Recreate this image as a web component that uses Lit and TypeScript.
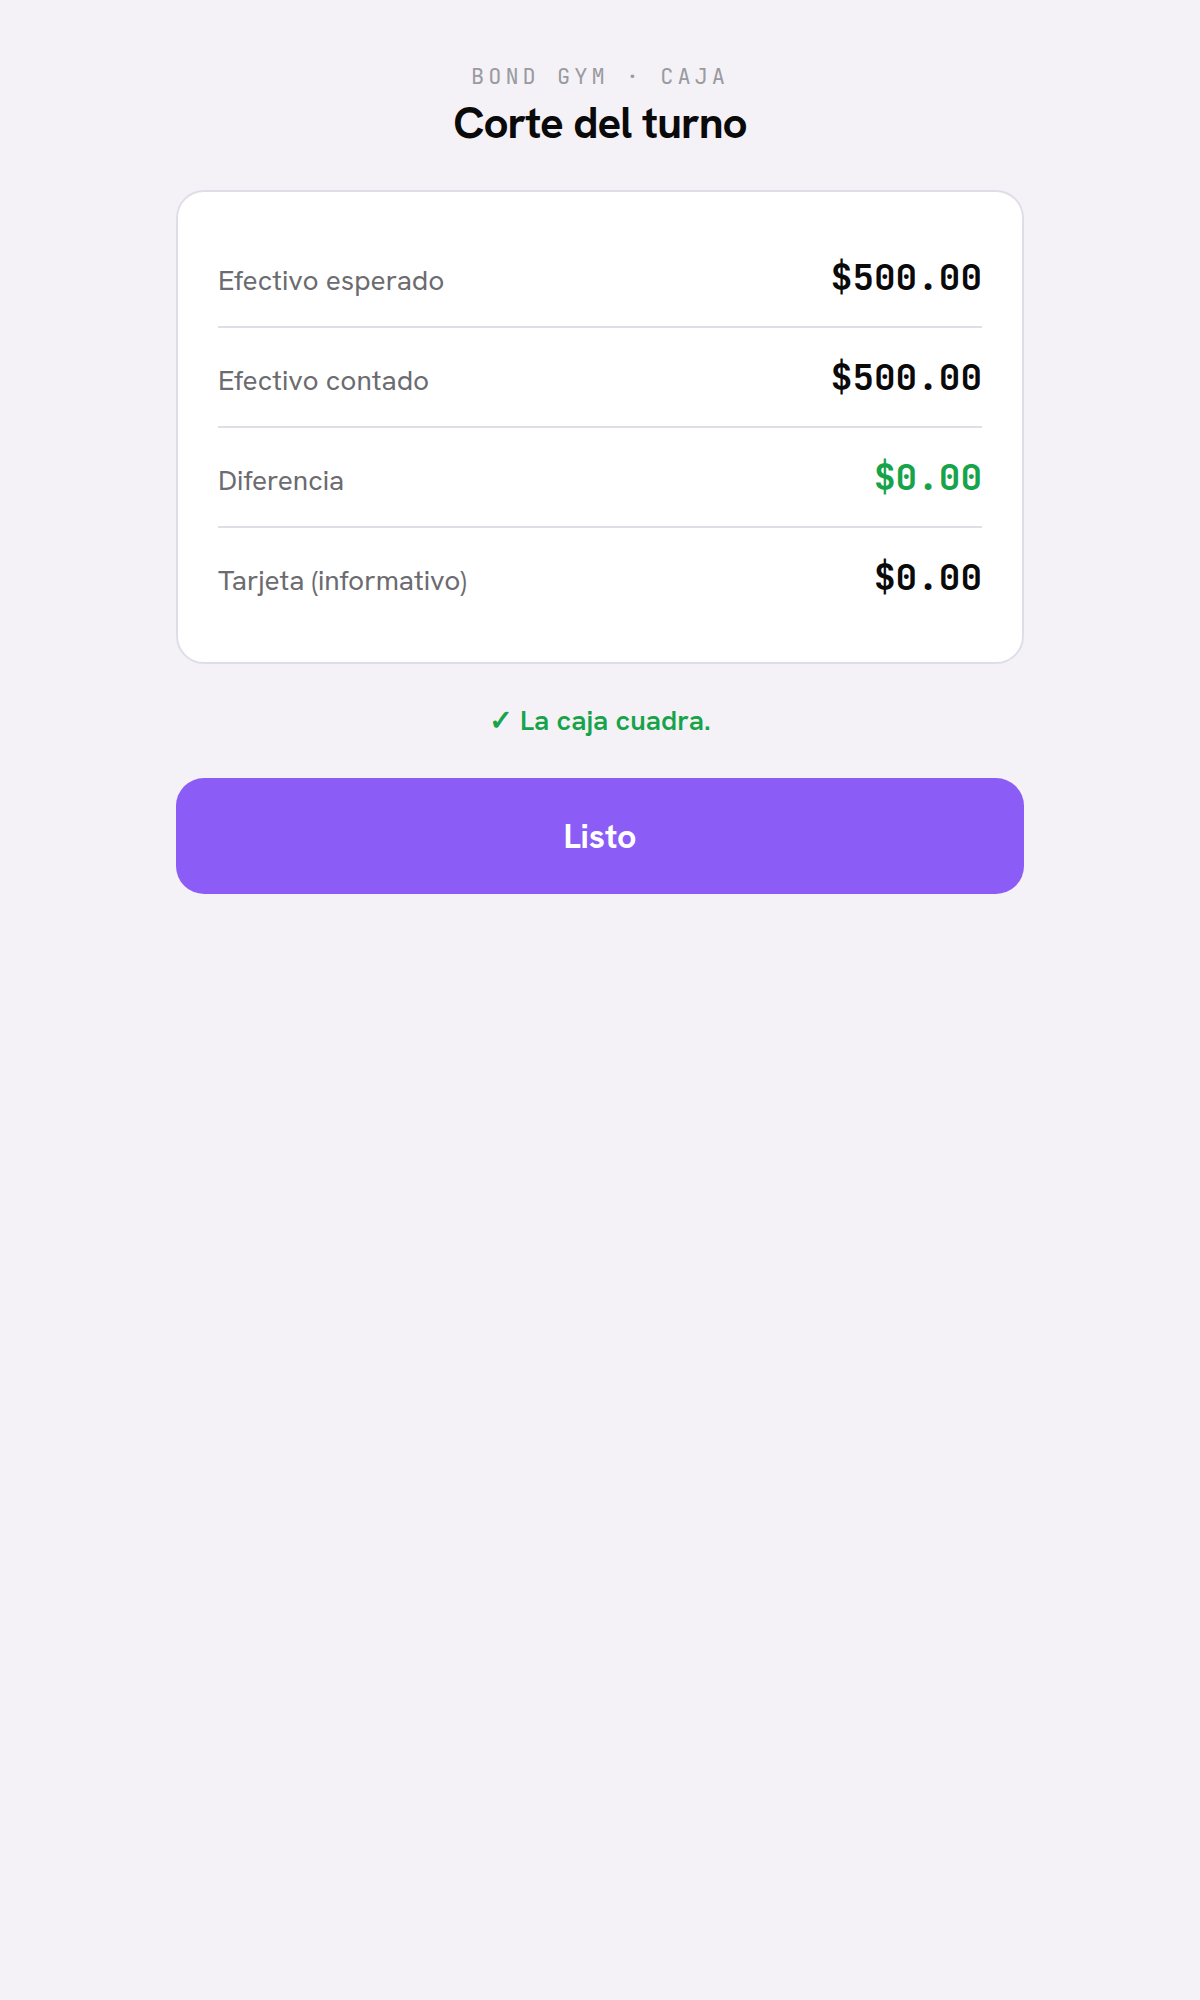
import { LitElement, css, html } from "lit";
import { customElement, property } from "lit/decorators.js";
import { classMap } from "lit/directives/class-map.js";

interface Total {
    label: string;
    amount: number;
    tone?: "ok";
}

const formatAmount = (amount: number) => `$${amount.toFixed(2)}`;

/**
 * Card with one line per total of the shift.
 */
@customElement("shift-totals")
class ShiftTotals extends LitElement {
    @property({ attribute: false })
    public totals: Total[] = [];

    public static styles = css`
        :host {
            display: block;
        }

        .card {
            margin: 0;
            padding: 36px 40px;
            background: #ffffff;
            border: 2px solid #dfdde8;
            border-radius: 28px;
        }

        .row {
            display: flex;
            align-items: baseline;
            justify-content: space-between;
            gap: 24px;
            padding: 24px 0 21px;
            line-height: 50px;
        }

        .row + .row {
            border-top: 2px solid #dfdde8;
        }

        .label {
            font-size: 28px;
            color: #6b6b70;
        }

        .amount {
            margin: 0;
            font-family: "JetBrains Mono", "Liberation Mono", monospace;
            font-size: 36px;
            font-weight: 700;
            color: #0a0a0a;
        }

        .amount.ok {
            color: #16a34a;
        }
    `;

    protected render() {
        return html`
            <dl class="card">
                ${this.totals.map(
                    (total) => html`
                        <div class="row">
                            <dt class="label">${total.label}</dt>
                            <dd class=${classMap({ amount: true, ok: total.tone === "ok" })}>
                                ${formatAmount(total.amount)}
                            </dd>
                        </div>
                    `
                )}
            </dl>
        `;
    }
}

@customElement("app-root")
class AppRoot extends LitElement {
    @property({ attribute: false })
    public totals: Total[] = [
        { label: "Efectivo esperado", amount: 500 },
        { label: "Efectivo contado", amount: 500 },
        { label: "Diferencia", amount: 0, tone: "ok" },
        { label: "Tarjeta (informativo)", amount: 0 }
    ];

    public static styles = css`
        :host {
            display: block;
            min-height: 100vh;
            background: #f4f2f7;
            color: #0a0a0a;
            font-family: "Hanken Grotesk", Inter, sans-serif;
        }

        * {
            box-sizing: border-box;
        }

        .page {
            display: flex;
            flex-direction: column;
            max-width: 896px;
            margin: 0 auto;
            padding: 60px 24px;
        }

        .header {
            margin-bottom: 38px;
            text-align: center;
        }

        .eyebrow {
            margin: 0;
            font-family: "JetBrains Mono", "Liberation Mono", monospace;
            font-size: 22px;
            line-height: 34px;
            letter-spacing: 4px;
            text-transform: uppercase;
            color: #9a9aa0;
        }

        .title {
            margin: 0;
            font-size: 44px;
            font-weight: 700;
            line-height: 58px;
            letter-spacing: -1px;
        }

        .status {
            margin: 35px 0 36px;
            font-size: 28px;
            font-weight: 600;
            line-height: 42px;
            text-align: center;
            color: #16a34a;
        }

        .check {
            font-family: "DejaVu Sans", sans-serif;
            -webkit-text-stroke: 1px currentColor;
        }

        .done {
            width: 100%;
            padding: 34px;
            border: 0;
            border-radius: 28px;
            background: #8b5cf6;
            color: #ffffff;
            font-family: inherit;
            font-size: 34px;
            font-weight: 700;
            line-height: 48px;
            cursor: pointer;
        }
    `;

    protected render() {
        return html`
            <main class="page">
                <header class="header">
                    <p class="eyebrow">Bond Gym · Caja</p>
                    <h1 class="title">Corte del turno</h1>
                </header>
                <shift-totals .totals=${this.totals}></shift-totals>
                <p class="status" role="status"><span class="check">✓</span> La caja cuadra.</p>
                <button class="done" type="button">Listo</button>
            </main>
        `;
    }
}

declare global {
    interface HTMLElementTagNameMap {
        "app-root": AppRoot;
        "shift-totals": ShiftTotals;
    }
}

export { AppRoot, ShiftTotals };
